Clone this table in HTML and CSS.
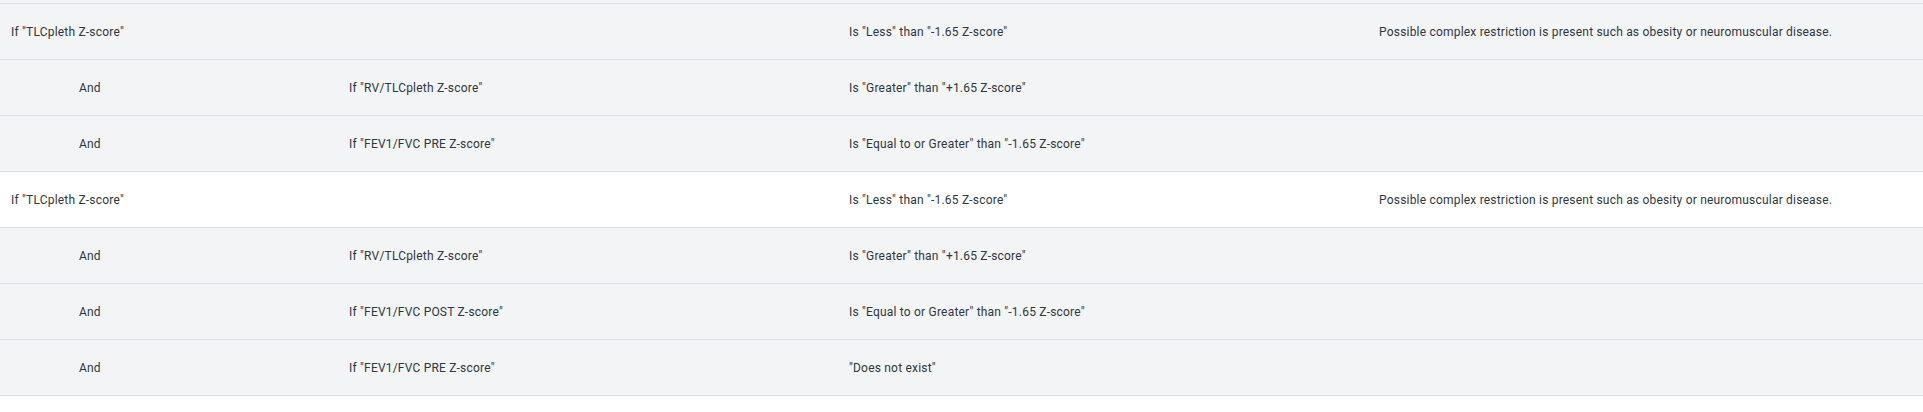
FILE: index.html
```html
<!DOCTYPE html>
<html lang="en">
<head>
  <meta charset="UTF-8" />
  <title>Rules</title>
  <link rel="stylesheet" href="styles.css">
</head>
<body>
  <div class="rules">
    <div class="row-cut"></div>

    <div class="row">
      <div class="cell">If "TLCpleth Z-score"</div>
      <div class="cell"></div>
      <div class="cell">Is "Less" than "-1.65 Z-score"</div>
      <div class="cell">Possible complex restriction is present such as obesity or neuromuscular disease.</div>
    </div>
    <div class="row">
      <div class="cell sub">And</div>
      <div class="cell">If "RV/TLCpleth Z-score"</div>
      <div class="cell">Is "Greater" than "+1.65 Z-score"</div>
      <div class="cell"></div>
    </div>
    <div class="row">
      <div class="cell sub">And</div>
      <div class="cell">If "FEV1/FVC PRE Z-score"</div>
      <div class="cell">Is "Equal to or Greater" than "-1.65 Z-score"</div>
      <div class="cell"></div>
    </div>

    <div class="row white">
      <div class="cell">If "TLCpleth Z-score"</div>
      <div class="cell"></div>
      <div class="cell">Is "Less" than "-1.65 Z-score"</div>
      <div class="cell">Possible complex restriction is present such as obesity or neuromuscular disease.</div>
    </div>
    <div class="row">
      <div class="cell sub">And</div>
      <div class="cell">If "RV/TLCpleth Z-score"</div>
      <div class="cell">Is "Greater" than "+1.65 Z-score"</div>
      <div class="cell"></div>
    </div>
    <div class="row">
      <div class="cell sub">And</div>
      <div class="cell">If "FEV1/FVC POST Z-score"</div>
      <div class="cell">Is "Equal to or Greater" than "-1.65 Z-score"</div>
      <div class="cell"></div>
    </div>
    <div class="row">
      <div class="cell sub">And</div>
      <div class="cell">If "FEV1/FVC PRE Z-score"</div>
      <div class="cell">"Does not exist"</div>
      <div class="cell"></div>
    </div>
  </div>
</body>
</html>
```

FILE: styles.css
```css
body {
  margin: 0;
  background-color: #ffffff;
  color: #2f3740;
  font-family: Roboto, 'Liberation Sans', sans-serif;
  font-size: 12px;
  letter-spacing: 0.2px;
}
.rules {
  width: 100%;
}
.row-cut {
  height: 3px;
  background-color: #f3f4f6;
  border-bottom: 1px solid #dcdfe3;
}
.row {
  display: grid;
  grid-template-columns: 338px 500px 530px 1fr;
  height: 55px;
  align-items: center;
  background-color: #f3f4f6;
  border-bottom: 1px solid #dcdfe3;
}
.row.white {
  background-color: #ffffff;
}
.cell {
  padding-left: 11px;
  white-space: nowrap;
}
.cell.sub {
  padding-left: 79px;
}
```
